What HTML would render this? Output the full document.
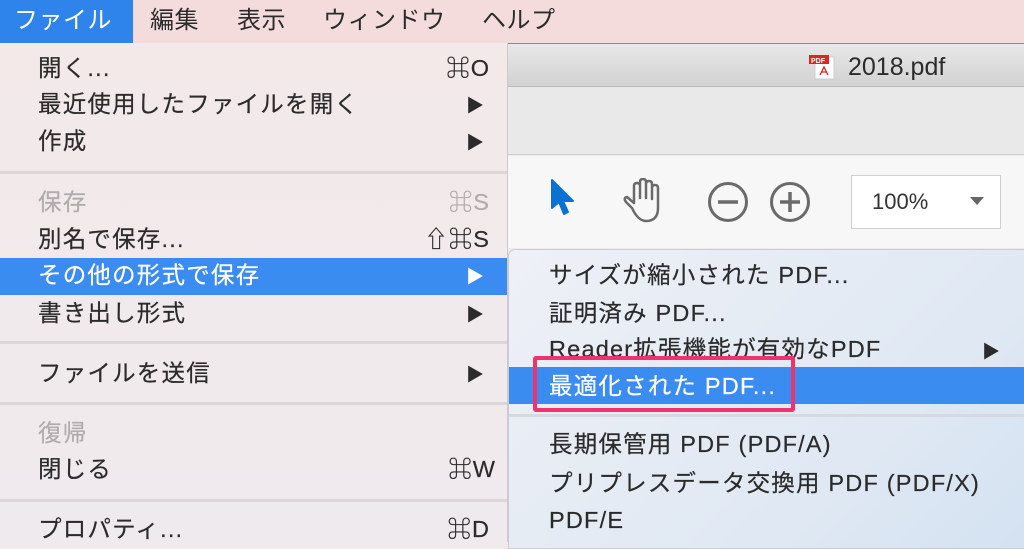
<!DOCTYPE html>
<html><head><meta charset="utf-8"><style>
*{margin:0;padding:0;box-sizing:border-box}
body{width:1024px;height:542px;overflow:hidden;position:relative;background:#f1e9ea;font-family:"Liberation Sans","Noto Sans CJK JP",sans-serif;color:#2b2b2b}
.a{position:absolute;white-space:nowrap}
.bar{left:0;top:0;width:1024px;height:43px;background:#f4dcdc}
.m{top:4px;font-size:24px;line-height:34px;letter-spacing:0.5px}
.it{font-size:23.5px;line-height:30px;letter-spacing:1.2px;-webkit-text-stroke:0.2px currentColor}
.sc{right:534px;text-align:right;letter-spacing:1px}
.sep{position:absolute;height:3px;background:#dcd6d8}
.arr{font-size:18px}
</style></head><body>
<div class="a bar"></div>
<div class="a" style="left:0;top:0;width:133px;height:43px;background:#2f84ec"></div>
<div class="a m" style="left:14px;color:#fff">ファイル</div>
<div class="a m" style="left:150px">編集</div>
<div class="a m" style="left:237px">表示</div>
<div class="a m" style="left:323px">ウィンドウ</div>
<div class="a m" style="left:482px">ヘルプ</div>

<!-- background window -->
<div class="a" style="left:508px;top:43px;width:516px;height:44px;background:linear-gradient(#e8e8e8,#d2d2d2);border-top:1px solid #888;border-bottom:1px solid #bcbcbc"></div>
<svg class="a" style="left:808px;top:53px" width="30" height="30"><rect x="7" y="4" width="19" height="22" fill="#fff" stroke="#ccc"/><rect x="1" y="2" width="20" height="9" fill="#e0261c"/><text x="3" y="10" font-size="7" fill="#fff" font-family="Liberation Sans" font-weight="bold">PDF</text><path d="M12 22 L16 14 L20 22 M13 19 L19 19" stroke="#e0261c" stroke-width="1.3" fill="none"/></svg>
<div class="a" style="left:848px;top:52px;font-size:25px;line-height:30px">2018.pdf</div>
<div class="a" style="left:508px;top:87px;width:516px;height:68px;background:#e9e9e9;border-bottom:1px solid #cfcfcf"></div>
<div class="a" style="left:508px;top:156px;width:516px;height:92px;background:#f7f7f7"></div>
<svg class="a" style="left:548px;top:178px" width="30" height="46"><path d="M4 2 L4 30 L11 24 L16 36 L20 34 L15 23 L25 23 Z" fill="#0a72d2" stroke="#0a72d2" stroke-width="2" stroke-linejoin="round"/></svg>
<svg class="a" style="left:620px;top:178px" width="50" height="50"><path d="M12 30 L6 24 Q3 20 7 19 L14 25 L14 8 Q14 5 17 5 Q20 5 20 8 L20 20 L20 4 Q20 1 23 1 Q26 1 26 4 L26 20 L26 6 Q26 3 29 3 Q32 3 32 6 L32 21 L32 10 Q32 7 35 7 Q38 7 38 10 L38 30 Q38 43 26 43 Q18 43 12 30 Z" fill="none" stroke="#6a6a6a" stroke-width="2.5" stroke-linejoin="round"/></svg>
<svg class="a" style="left:706px;top:180px" width="44" height="44"><circle cx="22" cy="22" r="18.5" fill="none" stroke="#6a6a6a" stroke-width="3"/><path d="M12 22 H32" stroke="#6a6a6a" stroke-width="3.5"/></svg>
<svg class="a" style="left:768px;top:180px" width="44" height="44"><circle cx="22" cy="22" r="18.5" fill="none" stroke="#6a6a6a" stroke-width="3"/><path d="M12 22 H32 M22 12 V32" stroke="#6a6a6a" stroke-width="3.5"/></svg>
<div class="a" style="left:851px;top:175px;width:150px;height:54px;background:#fff;border:1.5px solid #cfcfcf"></div>
<div class="a" style="left:872px;top:188px;font-size:22px;line-height:28px;color:#333">100%</div>
<svg class="a" style="left:970px;top:197px" width="14" height="10"><path d="M0 0 H14 L7 8 Z" fill="#666"/></svg>

<!-- left menu -->
<div class="a" style="left:0;top:43px;width:508px;height:499px;background:linear-gradient(#f3e9e9,#efeaee);border-right:1px solid #cfc9cc"></div>
<div class="a" style="left:0;top:258px;width:507px;height:37px;background:#3a8cf0"></div>
<div class="sep" style="left:0;top:171px;width:507px"></div>
<div class="sep" style="left:0;top:341px;width:507px"></div>
<div class="sep" style="left:0;top:402px;width:507px"></div>
<div class="sep" style="left:0;top:499px;width:507px"></div>

<div class="a it" style="left:38px;top:53px">開く...</div><div class="a it sc" style="top:53px">⌘O</div>
<div class="a it" style="left:38px;top:89px">最近使用したファイルを開く</div><div class="a arr" style="left:466px;top:92px">▶</div>
<div class="a it" style="left:38px;top:126px">作成</div><div class="a arr" style="left:466px;top:129px">▶</div>
<div class="a it" style="left:38px;top:187px;color:#b0abac">保存</div><div class="a it sc" style="top:187px;color:#b0abac">⌘S</div>
<div class="a it" style="left:38px;top:224px">別名で保存...</div><div class="a it sc" style="top:224px">⇧⌘S</div>
<div class="a it" style="left:38px;top:260px;color:#fff">その他の形式で保存</div><div class="a arr" style="left:466px;top:263px;color:#fff">▶</div>
<div class="a it" style="left:38px;top:298px">書き出し形式</div><div class="a arr" style="left:466px;top:301px">▶</div>
<div class="a it" style="left:38px;top:358px">ファイルを送信</div><div class="a arr" style="left:466px;top:361px">▶</div>
<div class="a it" style="left:38px;top:418px;color:#b0abac">復帰</div>
<div class="a it" style="left:38px;top:454px">閉じる</div><div class="a it sc" style="top:454px;right:528px">⌘W</div>
<div class="a it" style="left:38px;top:514px">プロパティ...</div><div class="a it sc" style="top:514px">⌘D</div>

<!-- submenu -->
<div class="a" style="left:508px;top:249px;width:520px;height:300px;background:linear-gradient(135deg,#eef0f6,#dfe8f3 70%,#d3e2f2);border:1px solid #c9ccd3;border-radius:7px 0 0 0"></div>
<div class="a" style="left:509px;top:367px;width:515px;height:37px;background:#3a8cf0"></div>
<div class="sep" style="left:509px;top:414px;width:515px;background:#d6d9df"></div>
<div class="a it" style="left:549px;top:260px">サイズが縮小された PDF...</div>
<div class="a it" style="left:549px;top:298px">証明済み PDF...</div>
<div class="a it" style="left:549px;top:334px">Reader拡張機能が有効なPDF</div><div class="a arr" style="left:982px;top:338px">▶</div>
<div class="a it" style="left:549px;top:371px;color:#fff">最適化された PDF...</div>
<div class="a it" style="left:549px;top:429px">長期保管用 PDF (PDF/A)</div>
<div class="a it" style="left:549px;top:468px">プリプレスデータ交換用 PDF (PDF/X)</div>
<div class="a it" style="left:549px;top:505px">PDF/E</div>
<div class="a" style="left:533px;top:356px;width:262px;height:56px;border:4px solid #f0326e;border-radius:3px"></div>
</body></html>
